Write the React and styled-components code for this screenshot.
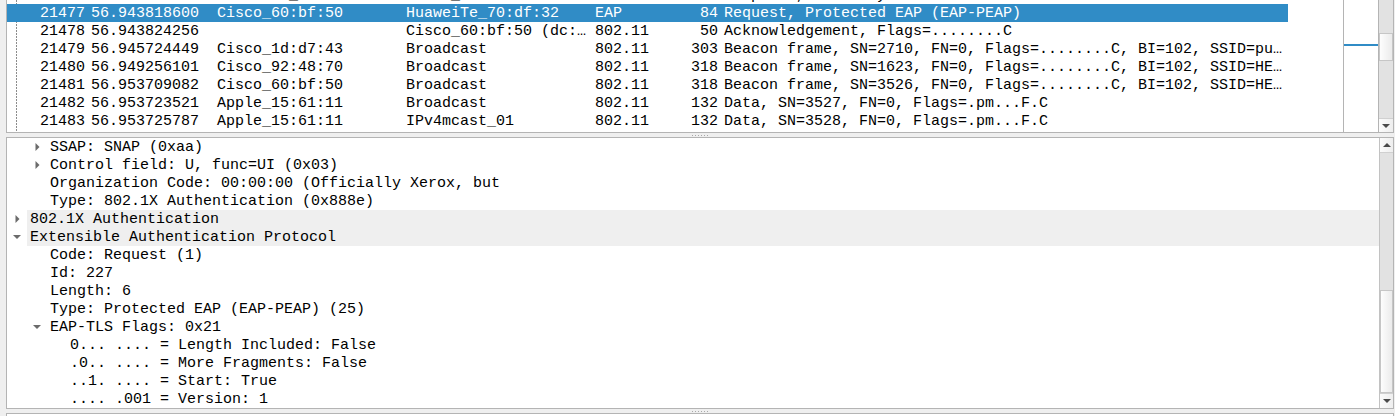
import React from 'react';
import styled, { createGlobalStyle } from 'styled-components';

const GlobalStyle = createGlobalStyle`
  html, body {
    margin: 0;
    padding: 0;
    background: #efefef;
  }
  body {
    font-family: "Liberation Mono", "DejaVu Sans Mono", monospace;
    font-size: 15px;
    color: #000;
  }
`;

const packets = [
  { no: 21476, time: '56.943815307', src: 'HuaweiTe_70:df:32', dst: 'Cisco_60:bf:50', proto: 'EAP', len: 113, info: 'Response, Identity' },
  { no: 21477, time: '56.943818600', src: 'Cisco_60:bf:50', dst: 'HuaweiTe_70:df:32', proto: 'EAP', len: 84, info: 'Request, Protected EAP (EAP-PEAP)', selected: true },
  { no: 21478, time: '56.943824256', src: '', dst: 'Cisco_60:bf:50 (dc:…', proto: '802.11', len: 50, info: 'Acknowledgement, Flags=........C' },
  { no: 21479, time: '56.945724449', src: 'Cisco_1d:d7:43', dst: 'Broadcast', proto: '802.11', len: 303, info: 'Beacon frame, SN=2710, FN=0, Flags=........C, BI=102, SSID=pu…' },
  { no: 21480, time: '56.949256101', src: 'Cisco_92:48:70', dst: 'Broadcast', proto: '802.11', len: 318, info: 'Beacon frame, SN=1623, FN=0, Flags=........C, BI=102, SSID=HE…' },
  { no: 21481, time: '56.953709082', src: 'Cisco_60:bf:50', dst: 'Broadcast', proto: '802.11', len: 318, info: 'Beacon frame, SN=3526, FN=0, Flags=........C, BI=102, SSID=HE…' },
  { no: 21482, time: '56.953723521', src: 'Apple_15:61:11', dst: 'Broadcast', proto: '802.11', len: 132, info: 'Data, SN=3527, FN=0, Flags=.pm...F.C' },
  { no: 21483, time: '56.953725787', src: 'Apple_15:61:11', dst: 'IPv4mcast_01', proto: '802.11', len: 132, info: 'Data, SN=3528, FN=0, Flags=.pm...F.C' },
];

const details = [
  { level: 1, arrow: 'right', text: 'SSAP: SNAP (0xaa)' },
  { level: 1, arrow: 'right', text: 'Control field: U, func=UI (0x03)' },
  { level: 1, text: 'Organization Code: 00:00:00 (Officially Xerox, but' },
  { level: 1, text: 'Type: 802.1X Authentication (0x888e)' },
  { level: 0, arrow: 'right', text: '802.1X Authentication', shade: true },
  { level: 0, arrow: 'down', text: 'Extensible Authentication Protocol', shade: true },
  { level: 1, text: 'Code: Request (1)' },
  { level: 1, text: 'Id: 227' },
  { level: 1, text: 'Length: 6' },
  { level: 1, text: 'Type: Protected EAP (EAP-PEAP) (25)' },
  { level: 1, arrow: 'down', text: 'EAP-TLS Flags: 0x21' },
  { level: 2, text: '0... .... = Length Included: False' },
  { level: 2, text: '.0.. .... = More Fragments: False' },
  { level: 2, text: '..1. .... = Start: True' },
  { level: 2, text: '.... .001 = Version: 1' },
];

const Window = styled.div`
  height: 416px;
  padding: 0 1px 0 6px;
  display: grid;
  grid-template-rows: 133px 4px 272px 4px 1fr;
  overflow: hidden;
`;

const Pane = styled.div`
  display: flex;
  background: #fff;
  border: 1px solid #b4b4b4;
  border-top-width: ${(p) => (p.$noTop ? 0 : 1)}px;
  overflow: hidden;
  min-height: 0;
`;

const ListViewport = styled.div`
  flex: 1;
  overflow: hidden;
  background: repeating-linear-gradient(to bottom, #8c8c8c 0 2px, transparent 2px 3px) 9px 0 / 1px 100% no-repeat, #fff;
`;

const PacketRow = styled.div`
  display: grid;
  grid-template-columns: 81px 126px 189px 189px 65px 64px 567px;
  width: 1281px;
  height: 18px;
  line-height: 20px;
  background: ${(p) => (p.$selected ? '#308cc6' : 'transparent')};
  color: ${(p) => (p.$selected ? '#fff' : '#000')};
  &:first-child {
    margin-top: -14px;
  }
`;

const Cell = styled.div`
  padding: 0 3px;
  white-space: pre;
  overflow: hidden;
  text-overflow: ellipsis;
  text-align: ${(p) => (p.$right ? 'right' : 'left')};
`;

const Minimap = styled.div`
  width: 34px;
  border-left: 1px solid #b4b4b4;
  border-right: 1px solid #b4b4b4;
  background: #fff;
`;

const MinimapMark = styled.div`
  height: 2px;
  margin-top: ${(p) => p.$at}px;
  background: #308cc6;
`;

const ScrollBar = styled.div`
  width: ${(p) => (p.$bordered ? 13 : 14)}px;
  display: flex;
  flex-direction: column;
  background: #e2e2e2;
  border-left: ${(p) => (p.$bordered ? '1px solid #c2c2c2' : 'none')};
`;

const Gap = styled.div`
  height: ${(p) => p.$h}px;
  flex: ${(p) => (p.$grow ? 1 : 'none')};
`;

const Thumb = styled.div`
  height: ${(p) => p.$h}px;
  box-sizing: border-box;
  border: 1px solid #c6c6c6;
  background: linear-gradient(to right, #fdfdfd, #ebebeb);
`;

const ArrowButton = styled.div`
  height: ${(p) => p.$h}px;
  display: flex;
  align-items: center;
  justify-content: center;
  background: linear-gradient(to right, #fbfbfb, #eeeeee);
  box-sizing: border-box;
  border-top: ${(p) => (p.$up ? 'none' : '1px solid #d0d0d0')};
  border-bottom: ${(p) => (p.$up ? '1px solid #d0d0d0' : 'none')};
`;

const Splitter = styled.div`
  background: #efefef;
  display: flex;
  align-items: center;
  justify-content: center;
`;

const Grip = styled.div`
  width: 16px;
  height: 1px;
  background: repeating-linear-gradient(to right, #a8a8a8 0 1px, transparent 1px 3px);
`;

const TreeViewport = styled.div`
  flex: 1;
  overflow: hidden;
  background: #fff;
`;

const TreeRow = styled.div`
  display: flex;
  height: 18px;
  line-height: 20px;
`;

const Branch = styled.div`
  width: ${(p) => (p.$level + 1) * 20}px;
  flex: none;
  display: flex;
  justify-content: flex-end;
`;

const ArrowSlot = styled.div`
  width: 20px;
  height: 18px;
  display: flex;
  align-items: center;
  justify-content: center;
`;

const Item = styled.div`
  flex: 1;
  padding-left: 3px;
  white-space: pre;
  background: ${(p) => (p.$shade ? '#efefef' : 'transparent')};
`;

const BytesPane = styled.div`
  background: #fff;
  border: 1px solid #b4b4b4;
  border-bottom: none;
`;

const Triangle = ({ dir, color = '#6b6b6b' }) => {
  if (dir === 'right') {
    return (
      <svg width="5" height="8" viewBox="0 0 5 8">
        <polygon points="0.5,0 4.5,4 0.5,8" fill={color} />
      </svg>
    );
  }
  if (dir === 'up') {
    return (
      <svg width="8" height="4" viewBox="0 0 8 4">
        <polygon points="0,4 8,4 4,0" fill={color} />
      </svg>
    );
  }
  return (
    <svg width="8" height="4" viewBox="0 0 8 4">
      <polygon points="0,0 8,0 4,4" fill={color} />
    </svg>
  );
};

const App = () => {
  return (
    <>
      <GlobalStyle />
      <Window>
        <Pane $noTop>
          <ListViewport>
            {packets.map((p) => (
              <PacketRow key={p.no} $selected={p.selected}>
                <Cell $right>{p.no}</Cell>
                <Cell>{p.time}</Cell>
                <Cell>{p.src}</Cell>
                <Cell>{p.dst}</Cell>
                <Cell>{p.proto}</Cell>
                <Cell $right>{p.len}</Cell>
                <Cell>{p.info}</Cell>
              </PacketRow>
            ))}
          </ListViewport>
          <Minimap>
            <MinimapMark $at={44} />
          </Minimap>
          <ScrollBar>
            <Gap $h={33} />
            <Thumb $h={28} />
            <Gap $grow />
            <ArrowButton $h={14}>
              <Triangle dir="down" color="#4a4a4a" />
            </ArrowButton>
          </ScrollBar>
        </Pane>

        <Splitter>
          <Grip />
        </Splitter>

        <Pane>
          <TreeViewport>
            {details.map((d, i) => (
              <TreeRow key={i}>
                <Branch $level={d.level}>
                  <ArrowSlot>{d.arrow && <Triangle dir={d.arrow} />}</ArrowSlot>
                </Branch>
                <Item $shade={d.shade}>{d.text}</Item>
              </TreeRow>
            ))}
          </TreeViewport>
          <ScrollBar $bordered>
            <ArrowButton $h={15} $up>
              <Triangle dir="up" color="#4a4a4a" />
            </ArrowButton>
            <Gap $h={137} />
            <Thumb $h={103} />
            <ArrowButton $h={15}>
              <Triangle dir="down" color="#4a4a4a" />
            </ArrowButton>
          </ScrollBar>
        </Pane>

        <Splitter>
          <Grip />
        </Splitter>

        <BytesPane />
      </Window>
    </>
  );
};

export default App;
